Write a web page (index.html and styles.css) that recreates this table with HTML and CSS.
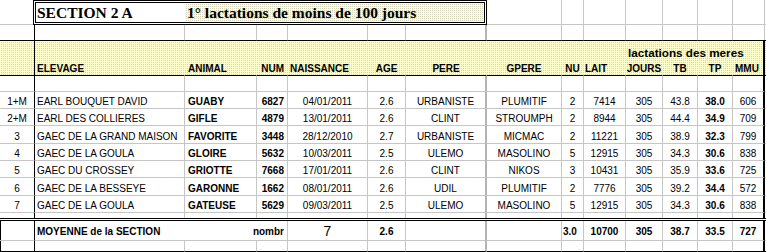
FILE: index.html
```html
<!DOCTYPE html>
<html>
<head>
<meta charset="utf-8">
<link rel="stylesheet" href="styles.css">
</head>
<body>
<div class="sheet">
  <div class="row r1">
    <div class="c cnone"></div>
    <div class="title"><span class="t1">SECTION 2 A</span><span class="t2">1° lactations de moins de 100 jours</span></div>
    <div class="c"></div><div class="c"></div><div class="c"></div><div class="c"></div><div class="c"></div><div class="c"></div><div class="c"></div>
    <div class="c tr"></div>
  </div>
  <div class="row std r2">
    <div class="c"></div><div class="c"></div><div class="c"></div><div class="c"></div><div class="c"></div><div class="c"></div><div class="c"></div><div class="c"></div><div class="c"></div><div class="c"></div><div class="c"></div><div class="c"></div><div class="c"></div><div class="c"></div><div class="c tr"></div>
  </div>
  <div class="row hdr">
    <div class="c ca"></div>
    <div class="c l">ELEVAGE</div>
    <div class="c l3">ANIMAL</div>
    <div class="c r">NUM</div>
    <div class="c l">NAISSANCE</div>
    <div class="c">AGE</div>
    <div class="c">PERE</div>
    <div class="c">GPERE</div>
    <div class="c">NU</div>
    <div class="c l0">LAIT</div>
    <div class="c stack"><span class="lact">lactations des meres</span><span>JOURS</span></div>
    <div class="c">TB</div>
    <div class="c">TP</div>
    <div class="c l cn">MMU</div>
    <div class="c tr"></div>
  </div>
  <div class="row std boxed r4">
    <div class="c"></div><div class="c"></div><div class="c"></div><div class="c"></div><div class="c"></div><div class="c"></div><div class="c"></div><div class="c"></div><div class="c"></div><div class="c"></div><div class="c"></div><div class="c"></div><div class="c"></div><div class="c"></div><div class="c tr"></div>
  </div>
  <div class="row std boxed d h17">
    <div class="c">1+M</div><div class="c">EARL BOUQUET DAVID</div><div class="c">GUABY</div><div class="c">6827</div><div class="c">04/01/2011</div><div class="c">2.6</div><div class="c">URBANISTE</div><div class="c">PLUMITIF</div><div class="c">2</div><div class="c">7414</div><div class="c">305</div><div class="c">43.8</div><div class="c">38.0</div><div class="c">606</div><div class="c tr"></div>
  </div>
  <div class="row std boxed d h17">
    <div class="c">2+M</div><div class="c">EARL DES COLLIERES</div><div class="c">GIFLE</div><div class="c">4879</div><div class="c">13/01/2011</div><div class="c">2.6</div><div class="c">CLINT</div><div class="c">STROUMPH</div><div class="c">2</div><div class="c">8944</div><div class="c">305</div><div class="c">44.4</div><div class="c">34.9</div><div class="c">709</div><div class="c tr"></div>
  </div>
  <div class="row std boxed d h18">
    <div class="c">3</div><div class="c">GAEC DE LA GRAND MAISON</div><div class="c">FAVORITE</div><div class="c">3448</div><div class="c">28/12/2010</div><div class="c">2.7</div><div class="c">URBANISTE</div><div class="c">MICMAC</div><div class="c">2</div><div class="c">11221</div><div class="c">305</div><div class="c">38.9</div><div class="c">32.3</div><div class="c">799</div><div class="c tr"></div>
  </div>
  <div class="row std boxed d h17">
    <div class="c">4</div><div class="c">GAEC DE LA GOULA</div><div class="c">GLOIRE</div><div class="c">5632</div><div class="c">10/03/2011</div><div class="c">2.5</div><div class="c">ULEMO</div><div class="c">MASOLINO</div><div class="c">5</div><div class="c">12915</div><div class="c">305</div><div class="c">34.3</div><div class="c">30.6</div><div class="c">838</div><div class="c tr"></div>
  </div>
  <div class="row std boxed d h17">
    <div class="c">5</div><div class="c">GAEC DU CROSSEY</div><div class="c">GRIOTTE</div><div class="c">7668</div><div class="c">17/01/2011</div><div class="c">2.6</div><div class="c">CLINT</div><div class="c">NIKOS</div><div class="c">3</div><div class="c">10431</div><div class="c">305</div><div class="c">35.9</div><div class="c">33.6</div><div class="c">725</div><div class="c tr"></div>
  </div>
  <div class="row std boxed d h18">
    <div class="c">6</div><div class="c">GAEC DE LA BESSEYE</div><div class="c">GARONNE</div><div class="c">1662</div><div class="c">08/01/2011</div><div class="c">2.6</div><div class="c">UDIL</div><div class="c">PLUMITIF</div><div class="c">2</div><div class="c">7776</div><div class="c">305</div><div class="c">39.2</div><div class="c">34.4</div><div class="c">572</div><div class="c tr"></div>
  </div>
  <div class="row std boxed d h17">
    <div class="c">7</div><div class="c">GAEC DE LA GOULA</div><div class="c">GATEUSE</div><div class="c">5629</div><div class="c">09/03/2011</div><div class="c">2.5</div><div class="c">ULEMO</div><div class="c">MASOLINO</div><div class="c">5</div><div class="c">12915</div><div class="c">305</div><div class="c">34.3</div><div class="c">30.6</div><div class="c">838</div><div class="c tr"></div>
  </div>
  <div class="row std boxed re">
    <div class="c"></div><div class="c"></div><div class="c"></div><div class="c"></div><div class="c"></div><div class="c"></div><div class="c"></div><div class="c"></div><div class="c"></div><div class="c"></div><div class="c"></div><div class="c"></div><div class="c"></div><div class="c"></div><div class="c tr"></div>
  </div>
  <div class="row rm">
    <div class="c ca"></div>
    <div class="c merged"><span>MOYENNE de la SECTION</span><span>nombr</span></div>
    <div class="c big">7</div>
    <div class="c">2.6</div>
    <div class="c cg"></div>
    <div class="c"></div>
    <div class="c l0">3.0</div>
    <div class="c">10700</div>
    <div class="c">305</div>
    <div class="c">38.7</div>
    <div class="c">33.5</div>
    <div class="c cn">727</div>
    <div class="c tr"></div>
  </div>
  <div class="row std boxed rl">
    <div class="c"></div><div class="c"></div><div class="c"></div><div class="c"></div><div class="c"></div><div class="c"></div><div class="c"></div><div class="c"></div><div class="c"></div><div class="c"></div><div class="c"></div><div class="c"></div><div class="c"></div><div class="c"></div><div class="c tr"></div>
  </div>
</div>
</body>
</html>
```
FILE: styles.css
```css
body {
  margin: 0;
  background: #fff;
  color: #000;
  font-family: "Liberation Sans", Arial, sans-serif;
  font-size: 10px;
}

.sheet {
  width: 766px;
}

.row {
  display: grid;
  grid-template-columns: 35px 150px 72px 31px 80px 38px 81px 75px 22px 42px 37px 35px 35px 32px 1px;
}

.c {
  box-sizing: border-box;
  min-width: 0;
  border-right: 1px solid #c6c6c6;
  border-bottom: 1px solid #c6c6c6;
  display: flex;
  align-items: flex-end;
  justify-content: center;
  line-height: 12px;
  white-space: nowrap;
}

.tr { border-right: none; }
.cnone { border-right: none; }
.ca { border-right-color: #000; }
.cg { border-right: 2px solid #b4b4b4; }
.cn { border-right: 2px solid #000; }

.l { justify-content: flex-start; padding-left: 2px; }
.l3 { justify-content: flex-start; padding-left: 3px; }
.l0 { justify-content: flex-start; padding-left: 1px; }
.r { justify-content: flex-end; padding-right: 3px; }

.std > .c:nth-child(1) { border-right-color: #000; }
.std > .c:nth-child(7) { border-right: 2px solid #b4b4b4; }
.boxed > .c:nth-child(14) { border-right: 2px solid #000; }

/* row heights */
.r1 { height: 25px; }
.r2 { height: 16px; }
.r2 > .c { border-bottom-color: #000; }
.hdr { height: 35px; }
.r4 { height: 16px; }
.h17 { height: 17px; }
.h18 { height: 18px; }
.re { height: 5px; }
.re > .c { border-bottom: none; }
.rl { height: 11px; box-shadow: inset 1px 0 #000; }
.rl > .c { border-bottom-color: #000; }

/* title */
.title {
  grid-column: 2 / 8;
  margin-left: -2px;
  box-sizing: border-box;
  border: 3px double #000;
  display: flex;
  font-family: "Liberation Serif", "Times New Roman", serif;
  font-weight: bold;
  font-size: 15.5px;
  line-height: 18px;
  white-space: nowrap;
}

.t1 {
  width: 149px;
  flex: none;
  box-sizing: border-box;
  padding: 1px 0 0 1px;
  background: #fff;
}

.t2 {
  flex: 1;
  padding: 1px 0 0 2px;
  background-color: #ffffcc;
  background-image: conic-gradient(from 90deg at 1px 1px, #d4d4bc 0 25%, transparent 0);
  background-size: 2px 2px;
}

/* header */
.hdr {
  background-color: #ffffcc;
  background-image: conic-gradient(from 90deg at 1px 1px, #d4d4bc 0 25%, transparent 0);
  background-size: 2px 2px;
  font-weight: bold;
}

.hdr > .c {
  border-right-color: transparent;
  border-bottom-color: #000;
  border-top: 1px solid #000;
  margin-top: -1px;
}

.hdr > .ca { border-right-color: #000; }
.hdr > .cn { border-right-color: #000; }
.hdr > .tr { border-right: none; }

.stack {
  flex-direction: column;
  align-items: center;
  justify-content: flex-end;
}

.lact {
  align-self: flex-start;
  margin-left: 2px;
  margin-bottom: 3px;
  font-size: 11.7px;
  line-height: 14px;
}

/* data rows */
.d > .c:nth-child(2) { justify-content: flex-start; padding-left: 2px; }
.d > .c:nth-child(3) { justify-content: flex-start; padding-left: 3px; font-weight: bold; }
.d > .c:nth-child(4) { justify-content: flex-end; padding-right: 3px; font-weight: bold; }
.d > .c:nth-child(13) { font-weight: bold; }

/* moyenne row */
.rm {
  height: 23px;
  border-top: 3px double #000;
  box-sizing: border-box;
  box-shadow: inset 1px 0 #000;
  font-weight: bold;
}

.rm > .c { padding-bottom: 2px; }

.merged {
  grid-column: 2 / 5;
  justify-content: space-between;
  padding-left: 2px;
  padding-right: 3px;
}

.big {
  font-size: 14px;
  font-weight: normal;
  line-height: 14px;
}
```
